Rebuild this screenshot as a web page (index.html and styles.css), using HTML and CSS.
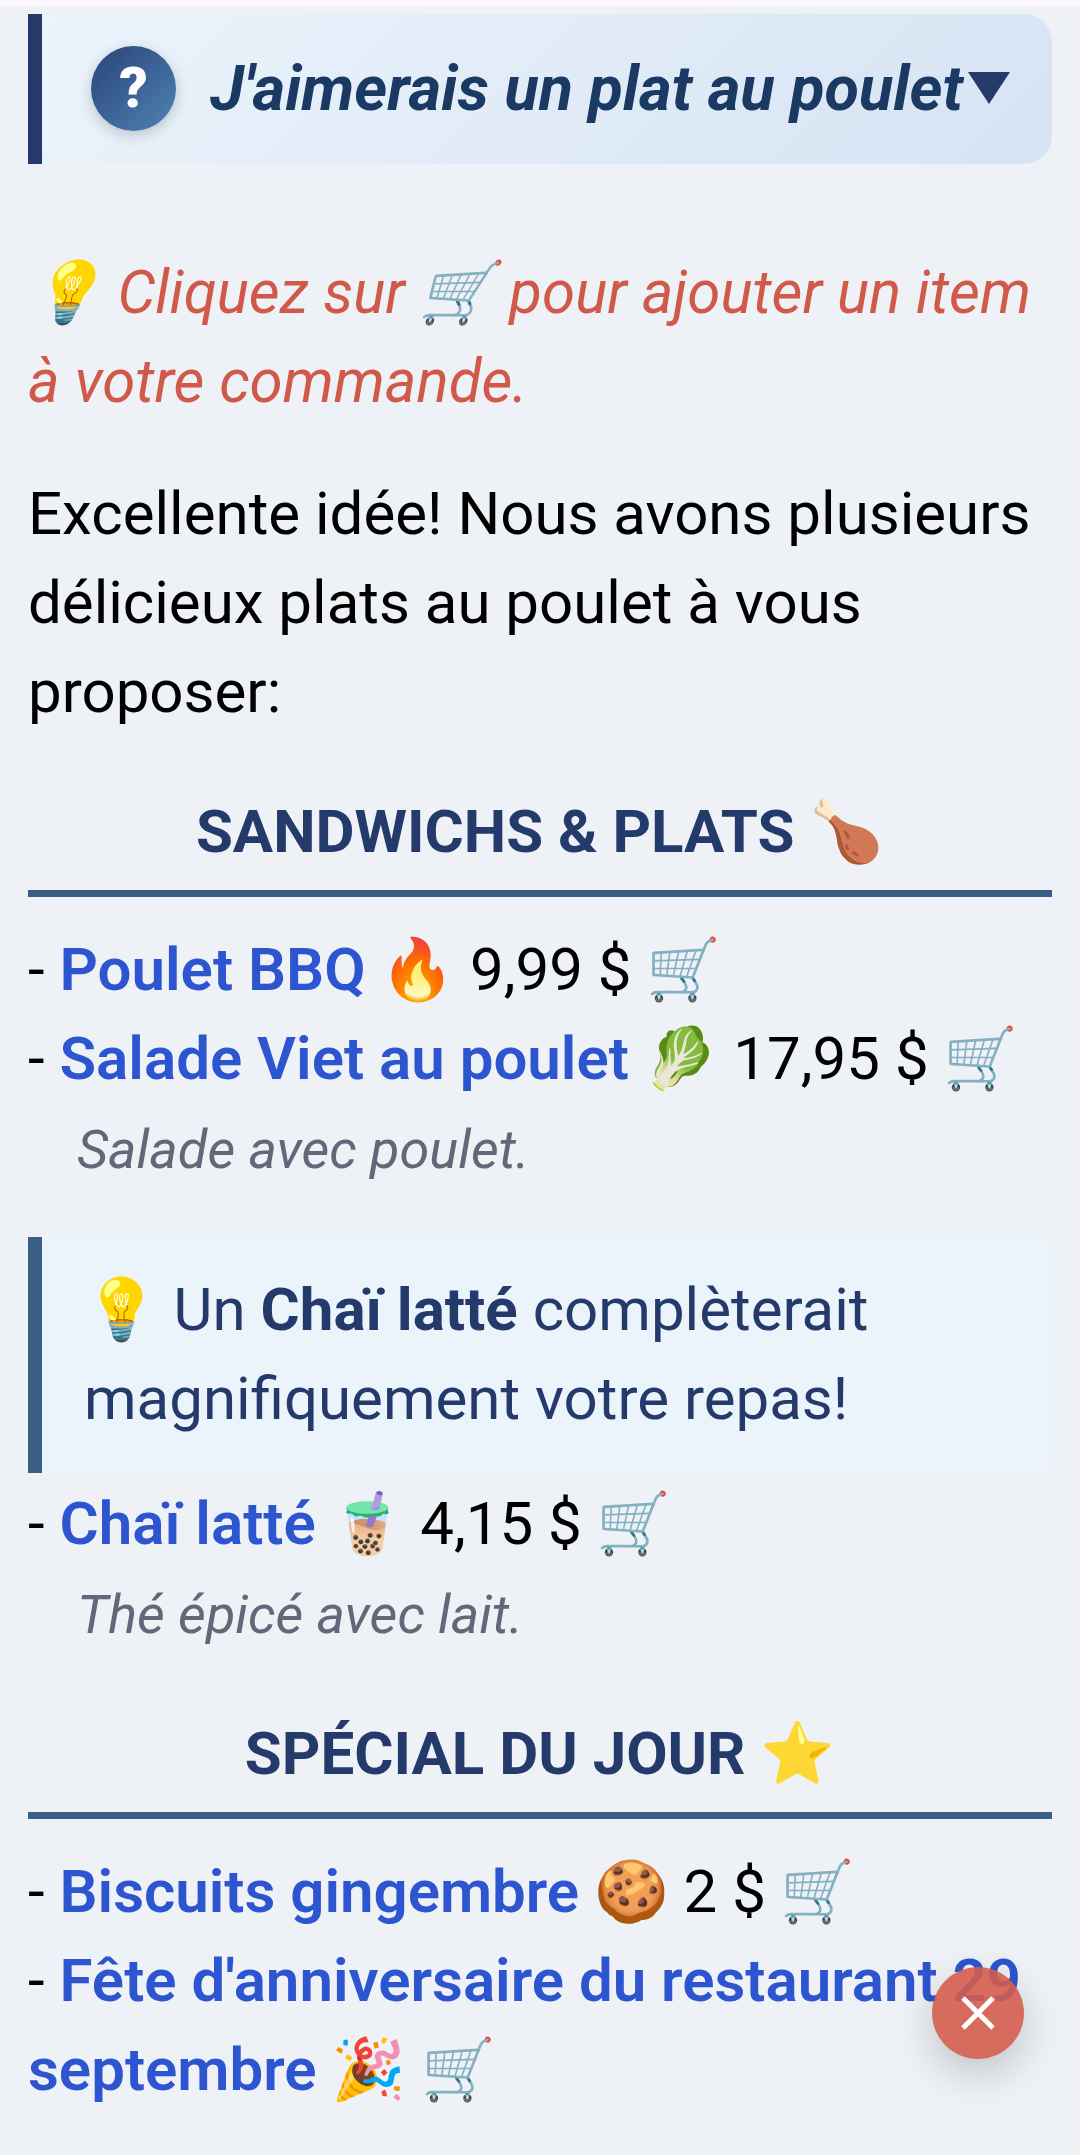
FILE: index.html
```html
<!DOCTYPE html>
<html lang="fr">
<head>
    <meta charset="UTF-8">
    <meta name="viewport" content="width=device-width, initial-scale=1.0">
    <title>Menu</title>
    <link rel="stylesheet" href="styles.css">
</head>
<body>
    <main class="container">
        <button class="question" type="button" aria-expanded="true">
            <span class="question-icon">?</span>
            <span class="question-text">J'aimerais un plat au poulet</span>
            <svg class="question-arrow" viewBox="0 0 42 32"><path d="M0 0H42L21 32Z"/></svg>
        </button>

        <p class="hint">💡 Cliquez sur 🛒 pour ajouter un item à votre commande.</p>
        <p class="intro">Excellente idée! Nous avons plusieurs délicieux plats au poulet à vous proposer:</p>

        <h2>SANDWICHS &amp; PLATS 🍗</h2>
        <div class="item">- <a href="#">Poulet BBQ</a> 🔥 9,99 $ <button class="cart" type="button">🛒</button></div>
        <div class="item">- <a href="#">Salade Viet au poulet</a> 🥬 17,95 $ <button class="cart" type="button">🛒</button></div>
        <div class="description">Salade avec poulet.</div>

        <div class="suggestion">💡 Un <strong>Chaï latté</strong> complèterait magnifiquement votre repas!</div>
        <div class="item">- <a href="#">Chaï latté</a> 🧋 4,15 $ <button class="cart" type="button">🛒</button></div>
        <div class="description">Thé épicé avec lait.</div>

        <h2>SPÉCIAL DU JOUR ⭐</h2>
        <div class="item">- <a href="#">Biscuits gingembre</a> 🍪 2 $ <button class="cart" type="button">🛒</button></div>
        <div class="item">- <a href="#">Fête d'anniversaire du restaurant 29 septembre</a> 🎉 <button class="cart" type="button">🛒</button></div>
    </main>

    <button class="close-button" type="button" aria-label="Fermer">
        <svg viewBox="0 0 34 34"><path d="M2 2L32 32M32 2L2 32"/></svg>
    </button>
</body>
</html>
```
FILE: styles.css
```css
* {
    box-sizing: border-box;
}
body {
    margin: 0;
    border-top: 7px solid #faf6fe;
    background-color: #eef2f7;
    color: #000;
    font-family: Roboto, "Noto Color Emoji", sans-serif;
    font-size: 60px;
    line-height: 89px;
}
button {
    margin: 0;
    padding: 0;
    border: none;
    background: none;
    color: inherit;
    font: inherit;
    cursor: pointer;
}
.container {
    padding: 7px 28px 40px;
}
.question {
    display: flex;
    align-items: center;
    width: 100%;
    min-height: 150px;
    padding: 28px 42px 30px 49px;
    border-left: 14px solid #233a6a;
    border-radius: 0 28px 28px 0;
    background: linear-gradient(135deg, #ebf4fb, #d7e3f4);
    color: #1a3a63;
    font-size: 63px;
    font-weight: 700;
    font-style: italic;
    text-align: left;
}
.question-icon {
    display: flex;
    align-items: center;
    justify-content: center;
    flex-shrink: 0;
    width: 85px;
    height: 85px;
    margin-right: 34px;
    border-radius: 50%;
    background: linear-gradient(135deg, #2a4478, #4f82b4);
    box-shadow: 0 4px 14px rgba(0, 0, 0, 0.2);
    color: #fff;
    font-size: 56px;
    font-weight: 900;
    font-style: normal;
    line-height: 80px;
}
.question-text {
    flex: 1;
    white-space: nowrap;
}
.question-arrow {
    flex-shrink: 0;
    width: 42px;
    height: 32px;
    fill: #233a6a;
}
.hint {
    margin: 84px 0 43px;
    color: #d0594a;
    font-style: italic;
}
.intro {
    margin: 0 0 51px;
}
h2 {
    margin: 47px 0 28px;
    padding-bottom: 14px;
    border-bottom: 7px solid #3a5e84;
    color: #233a6a;
    font-size: 60px;
    font-weight: 700;
    text-align: center;
}
.item a {
    color: #2d55cf;
    font-weight: 600;
    text-decoration: none;
}
.cart {
    display: inline;
}
.description {
    padding-left: 49px;
    color: #66667a;
    font-size: 54px;
    font-style: italic;
    line-height: 94px;
}
.suggestion {
    margin: 40px 0 6px;
    padding: 28px 42px 30px;
    border-left: 14px solid #3a5e84;
    border-radius: 0 14px 14px 0;
    background-color: #ebf3fb;
    color: #233a6a;
}
.close-button {
    position: fixed;
    right: 56px;
    bottom: 96px;
    display: flex;
    align-items: center;
    justify-content: center;
    width: 92px;
    height: 92px;
    border-radius: 50%;
    background-color: rgba(211, 92, 76, 0.9);
    box-shadow: 0 14px 42px rgba(0, 0, 0, 0.2);
}
.close-button svg {
    width: 34px;
    height: 34px;
    stroke: #fff;
    stroke-width: 5;
}
```
